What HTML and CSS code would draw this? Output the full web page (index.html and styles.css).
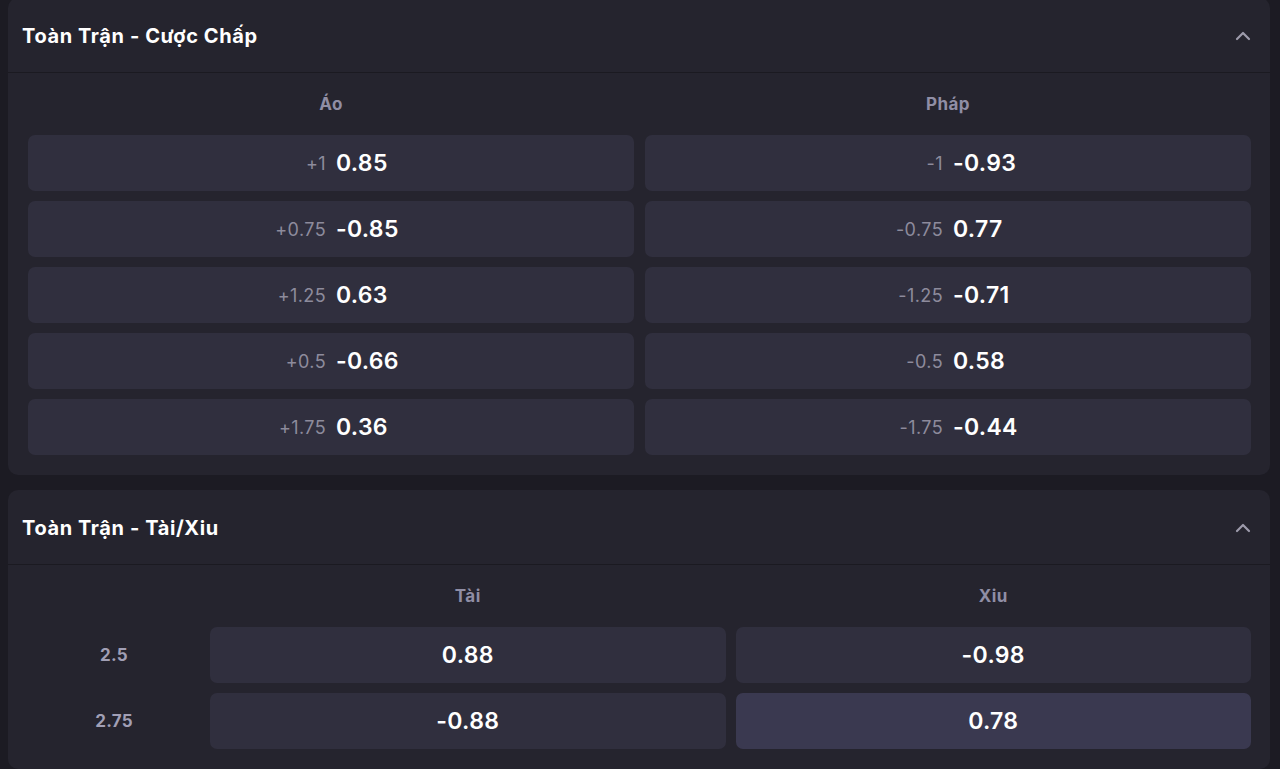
FILE: index.html
```html
<!DOCTYPE html>
<html lang="vi">
<head>
    <meta charset="UTF-8">
    <meta name="viewport" content="width=device-width, initial-scale=1.0">
    <title>Kèo trận đấu</title>
    <link rel="stylesheet" href="styles.css">
</head>
<body>
    <div class="markets">
        <!-- Cược chấp -->
        <div class="market">
            <div class="market-header">
                <h2 class="market-title">Toàn Trận - Cược Chấp</h2>
                <svg class="toggle" width="18" height="18" viewBox="0 0 18 18"><path d="M3 12l6-6 6 6" fill="none" stroke="currentColor" stroke-width="2.2" stroke-linecap="round" stroke-linejoin="round"/></svg>
            </div>
            <div class="market-body">
                <div class="handicap-grid">
                    <div class="col-label">Áo</div>
                    <div class="col-label">Pháp</div>

                    <button class="odd-btn"><span class="line">+1</span><span class="price">0.85</span></button>
                    <button class="odd-btn"><span class="line">-1</span><span class="price">-0.93</span></button>

                    <button class="odd-btn"><span class="line">+0.75</span><span class="price">-0.85</span></button>
                    <button class="odd-btn"><span class="line">-0.75</span><span class="price">0.77</span></button>

                    <button class="odd-btn"><span class="line">+1.25</span><span class="price">0.63</span></button>
                    <button class="odd-btn"><span class="line">-1.25</span><span class="price">-0.71</span></button>

                    <button class="odd-btn"><span class="line">+0.5</span><span class="price">-0.66</span></button>
                    <button class="odd-btn"><span class="line">-0.5</span><span class="price">0.58</span></button>

                    <button class="odd-btn"><span class="line">+1.75</span><span class="price">0.36</span></button>
                    <button class="odd-btn"><span class="line">-1.75</span><span class="price">-0.44</span></button>
                </div>
            </div>
        </div>

        <!-- Tài/Xỉu -->
        <div class="market">
            <div class="market-header">
                <h2 class="market-title">Toàn Trận - Tài/Xiu</h2>
                <svg class="toggle" width="18" height="18" viewBox="0 0 18 18"><path d="M3 12l6-6 6 6" fill="none" stroke="currentColor" stroke-width="2.2" stroke-linecap="round" stroke-linejoin="round"/></svg>
            </div>
            <div class="market-body">
                <div class="total-grid">
                    <div></div>
                    <div class="col-label">Tài</div>
                    <div class="col-label">Xiu</div>

                    <div class="row-label">2.5</div>
                    <button class="odd-btn center"><span class="price">0.88</span></button>
                    <button class="odd-btn center"><span class="price">-0.98</span></button>

                    <div class="row-label">2.75</div>
                    <button class="odd-btn center"><span class="price">-0.88</span></button>
                    <button class="odd-btn center active"><span class="price">0.78</span></button>
                </div>
            </div>
        </div>
    </div>
</body>
</html>
```

FILE: styles.css
```css
* {
    margin: 0;
    padding: 0;
    box-sizing: border-box;
}
body {
    font-family: 'Inter', 'Noto Sans', sans-serif;
    background: #1c1b23;
    color: #ffffff;
    overflow: hidden;
}
.markets {
    display: flex;
    flex-direction: column;
    gap: 15px;
    padding: 0 10px 0 8px;
    margin-top: -2px;
}
.market {
    background: #25242e;
    border-radius: 10px;
}
.market-header {
    height: 75px;
    display: flex;
    align-items: center;
    justify-content: space-between;
    padding: 1px 18px 0 14px;
    border-bottom: 1px solid #1b1a21;
}
.market-title {
    font-size: 20px;
    font-weight: 700;
    letter-spacing: 0.6px;
}
.toggle {
    color: #9d9bab;
}
.market-body {
    padding: 19px 19px 20px 20px;
}
.handicap-grid {
    display: grid;
    grid-template-columns: 1fr 1fr;
    grid-template-rows: 33px;
    grid-auto-rows: 56px;
    column-gap: 11px;
    row-gap: 10px;
}
.total-grid {
    display: grid;
    grid-template-columns: 172px 1fr 1fr;
    grid-template-rows: 33px;
    grid-auto-rows: 56px;
    column-gap: 10px;
    row-gap: 10px;
}
.col-label {
    text-align: center;
    font-size: 17px;
    font-weight: 700;
    letter-spacing: 0.4px;
    color: #908ea5;
    line-height: 24px;
}
.row-label {
    display: flex;
    align-items: center;
    justify-content: center;
    font-size: 17px;
    font-weight: 700;
    letter-spacing: 0.3px;
    color: #a19fb5;
}
.odd-btn {
    display: flex;
    align-items: center;
    gap: 10px;
    background: #302f3e;
    border: none;
    border-radius: 7px;
    color: #ffffff;
    font-family: inherit;
    cursor: pointer;
}
.odd-btn .line {
    flex: 1;
    text-align: right;
    font-size: 18px;
    letter-spacing: 0.4px;
    color: #8d8b9c;
}
.odd-btn .price {
    flex: 1;
    text-align: left;
    font-size: 23px;
    font-weight: 600;
    letter-spacing: 0.3px;
}
.odd-btn.center {
    justify-content: center;
}
.odd-btn.center .price {
    flex: none;
    text-align: center;
}
.odd-btn.active {
    background: #3a3950;
}
```
